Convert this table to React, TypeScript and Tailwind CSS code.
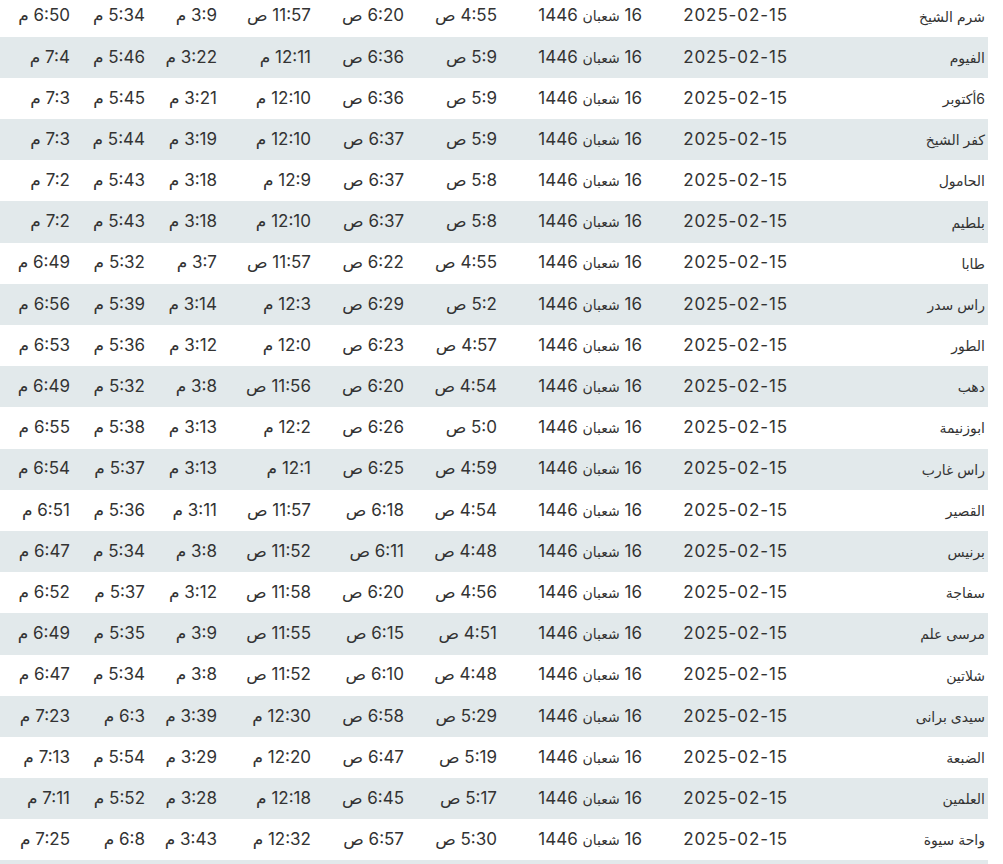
import React from "react";

type Row = [string, string, string, string, string, string, string];

const rows: Row[] = [
  ["شرم الشيخ", "4:55 ص", "6:20 ص", "11:57 ص", "3:9 م", "5:34 م", "6:50 م"],
  ["الفيوم", "5:9 ص", "6:36 ص", "12:11 م", "3:22 م", "5:46 م", "7:4 م"],
  ["6أكتوبر", "5:9 ص", "6:36 ص", "12:10 م", "3:21 م", "5:45 م", "7:3 م"],
  ["كفر الشيخ", "5:9 ص", "6:37 ص", "12:10 م", "3:19 م", "5:44 م", "7:3 م"],
  ["الحامول", "5:8 ص", "6:37 ص", "12:9 م", "3:18 م", "5:43 م", "7:2 م"],
  ["بلطيم", "5:8 ص", "6:37 ص", "12:10 م", "3:18 م", "5:43 م", "7:2 م"],
  ["طابا", "4:55 ص", "6:22 ص", "11:57 ص", "3:7 م", "5:32 م", "6:49 م"],
  ["راس سدر", "5:2 ص", "6:29 ص", "12:3 م", "3:14 م", "5:39 م", "6:56 م"],
  ["الطور", "4:57 ص", "6:23 ص", "12:0 م", "3:12 م", "5:36 م", "6:53 م"],
  ["دهب", "4:54 ص", "6:20 ص", "11:56 ص", "3:8 م", "5:32 م", "6:49 م"],
  ["ابوزنيمة", "5:0 ص", "6:26 ص", "12:2 م", "3:13 م", "5:38 م", "6:55 م"],
  ["راس غارب", "4:59 ص", "6:25 ص", "12:1 م", "3:13 م", "5:37 م", "6:54 م"],
  ["القصير", "4:54 ص", "6:18 ص", "11:57 ص", "3:11 م", "5:36 م", "6:51 م"],
  ["برنيس", "4:48 ص", "6:11 ص", "11:52 ص", "3:8 م", "5:34 م", "6:47 م"],
  ["سفاجة", "4:56 ص", "6:20 ص", "11:58 ص", "3:12 م", "5:37 م", "6:52 م"],
  ["مرسى علم", "4:51 ص", "6:15 ص", "11:55 ص", "3:9 م", "5:35 م", "6:49 م"],
  ["شلاتين", "4:48 ص", "6:10 ص", "11:52 ص", "3:8 م", "5:34 م", "6:47 م"],
  ["سيدى برانى", "5:29 ص", "6:58 ص", "12:30 م", "3:39 م", "6:3 م", "7:23 م"],
  ["الضبعة", "5:19 ص", "6:47 ص", "12:20 م", "3:29 م", "5:54 م", "7:13 م"],
  ["العلمين", "5:17 ص", "6:45 ص", "12:18 م", "3:28 م", "5:52 م", "7:11 م"],
  ["واحة سيوة", "5:30 ص", "6:57 ص", "12:32 م", "3:43 م", "6:8 م", "7:25 م"],
];

export default function App() {
  return (
    <div className="w-[1003px] h-[864px] overflow-hidden bg-white">
      <div
        dir="rtl"
        className="w-[988px] -mt-[4.5px] text-[#333333] text-[17px]"
        style={{ fontFamily: "Inter, 'DejaVu Sans', sans-serif" }}
      >
        {rows.map((r, i) => (
          <div
            key={i}
            className={`grid grid-cols-[199px_145px_145px_93px_93px_94px_72px_75px_72px] h-[41.2px] items-center ${
              i % 2 === 1 ? "bg-[#e2e9eb]" : "bg-white"
            }`}
          >
            <div className="pr-[3px] whitespace-nowrap text-[14px]">{r[0]}</div>
            <div className="pr-[1px] whitespace-nowrap tracking-[0.9px]">2025-02-15</div>
            <div className="pr-[2px] whitespace-nowrap">
              16 <span className="text-[14px]">شعبان</span> 1446
            </div>
            <div className="pr-[2px] whitespace-nowrap">{r[1]}</div>
            <div className="pr-[2px] whitespace-nowrap">{r[2]}</div>
            <div className="pr-[2px] whitespace-nowrap">{r[3]}</div>
            <div className="pr-[2px] whitespace-nowrap">{r[4]}</div>
            <div className="pr-[2px] whitespace-nowrap">{r[5]}</div>
            <div className="pr-[2px] whitespace-nowrap">{r[6]}</div>
          </div>
        ))}
        <div className="h-[41.2px] bg-[#e2e9eb]" />
      </div>
    </div>
  );
}
